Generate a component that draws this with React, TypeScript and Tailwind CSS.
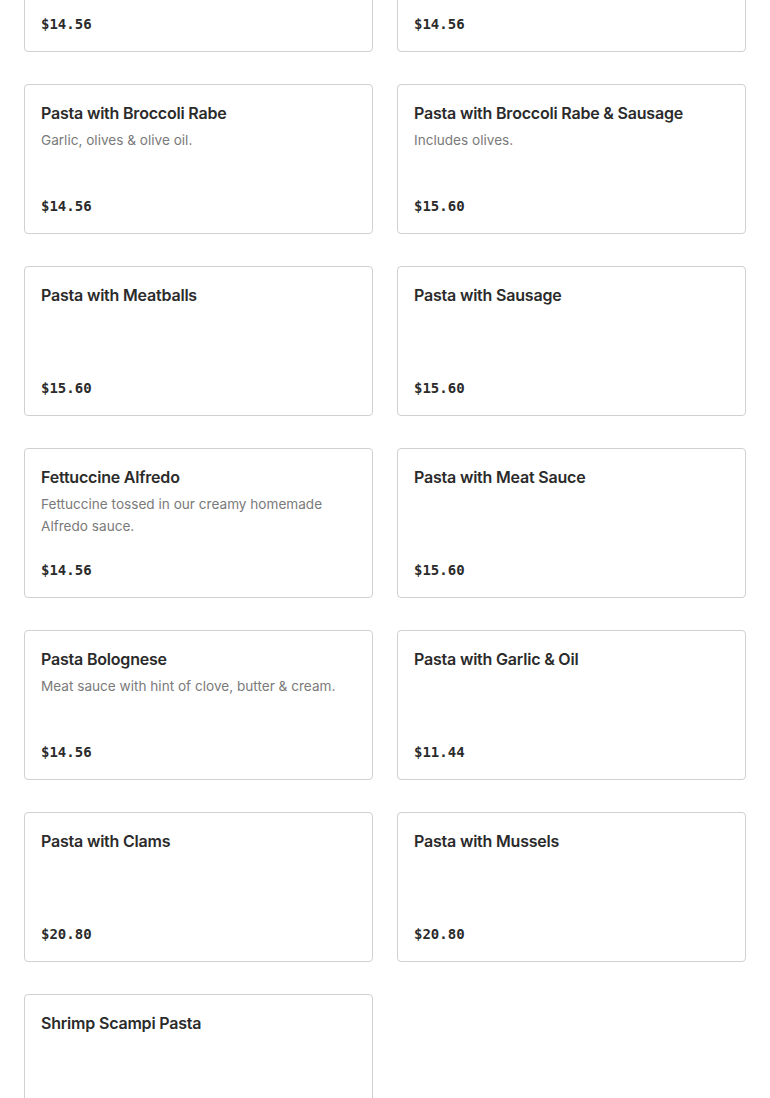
const items = [
  { name: "Pasta", desc: "", price: "$14.56" },
  { name: "Pasta", desc: "", price: "$14.56" },
  { name: "Pasta with Broccoli Rabe", desc: "Garlic, olives & olive oil.", price: "$14.56" },
  { name: "Pasta with Broccoli Rabe & Sausage", desc: "Includes olives.", price: "$15.60" },
  { name: "Pasta with Meatballs", desc: "", price: "$15.60" },
  { name: "Pasta with Sausage", desc: "", price: "$15.60" },
  { name: "Fettuccine Alfredo", desc: "Fettuccine tossed in our creamy homemade Alfredo sauce.", price: "$14.56" },
  { name: "Pasta with Meat Sauce", desc: "", price: "$15.60" },
  { name: "Pasta Bolognese", desc: "Meat sauce with hint of clove, butter & cream.", price: "$14.56" },
  { name: "Pasta with Garlic & Oil", desc: "", price: "$11.44" },
  { name: "Pasta with Clams", desc: "", price: "$20.80" },
  { name: "Pasta with Mussels", desc: "", price: "$20.80" },
  { name: "Shrimp Scampi Pasta", desc: "", price: "$18.72" },
]

function MenuCard({ name, desc, price }: { name: string; desc: string; price: string }) {
  return (
    <div className="flex h-[150px] flex-col rounded-[4px] border border-[#d0d0d0] bg-white px-4 pt-4 pb-[15px]">
      <h3 className="text-[16px] leading-6 font-semibold tracking-[-0.2px] text-[#2b2b2b]">{name}</h3>
      {desc && (
        <p className="mt-1 text-[13.6px] leading-[22px] text-[#7a7a7a]">{desc}</p>
      )}
      <div className="mt-auto font-['DejaVu_Sans_Mono',monospace] text-[14px] leading-6 font-semibold text-[#2b2b2b]">
        {price}
      </div>
    </div>
  )
}

export default function App() {
  return (
    <div className="min-h-screen bg-white font-['Inter',sans-serif] px-6">
      <div className="-mt-[98px] grid grid-cols-2 gap-x-6 gap-y-8">
        {items.map((it, i) => (
          <MenuCard key={i} {...it} />
        ))}
      </div>
    </div>
  )
}
